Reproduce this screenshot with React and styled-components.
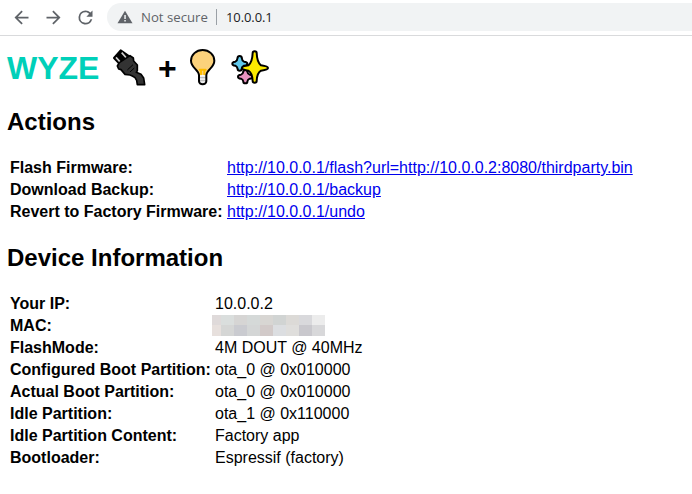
import React from "react";
import styled, { createGlobalStyle } from "styled-components";

const GlobalStyle = createGlobalStyle`
  body {
    margin: 0;
    background: #fff;
    color: #000;
    font: 16px/18px "Liberation Sans", Arial, sans-serif;
    overflow: hidden;
  }
`;

const Toolbar = styled.header`
  display: flex;
  align-items: flex-start;
  box-sizing: border-box;
  height: 36px;
  padding: 3px 0 0 10px;
  border-bottom: 1px solid #d9dadc;
`;

const NavButton = styled.button`
  display: flex;
  align-items: center;
  justify-content: center;
  width: 22px;
  height: 28px;
  margin-right: 10px;
  padding: 0;
  border: 0;
  background: none;
  color: #5f6368;
`;

const AddressBar = styled.div`
  display: flex;
  align-items: center;
  flex: 1;
  box-sizing: border-box;
  height: 28px;
  margin-left: 1px;
  padding-left: 10px;
  border-radius: 14px 0 0 14px;
  background: #f1f3f4;
  font: 14px/28px "Open Sans", "Noto Sans", sans-serif;
`;

const Security = styled.span`
  width: 67px;
  margin-left: 8px;
  color: #5f6368;
  font-size: 13.2px;
  white-space: nowrap;
`;

const Divider = styled.span`
  width: 1px;
  height: 16px;
  margin: 0 9px 0 8px;
  background: #9aa0a6;
`;

const Address = styled.span`
  color: #202124;
  font-size: 13px;
  letter-spacing: -0.1px;
`;

const Page = styled.main`
  padding: 8px 7px;
`;

const Title = styled.h1`
  display: flex;
  align-items: flex-start;
  height: 50px;
  margin: 0 0 14px;
  font-size: 32px;
  line-height: 48px;
`;

const Brand = styled.span`
  width: 103px;
  color: #00d0b9;
`;

const Plus = styled.span`
  width: 28px;
  padding-left: 8px;
`;

const Heading = styled.h2`
  margin: 0 0 21px;
  font-size: 24px;
  line-height: 28px;
`;

const List = styled.dl`
  display: grid;
  grid-template-columns: ${(p) => p.$label}px 1fr;
  grid-auto-rows: 22px;
  margin: 0 0 ${(p) => p.$gap || 0}px;
  padding-left: 3px;
  line-height: 22px;
  white-space: nowrap;
`;

const Term = styled.dt`
  font-weight: bold;
`;

const Value = styled.dd`
  margin: 0;
`;

const Link = styled.a`
  color: #0000ee;
  text-decoration: underline;
`;

const Mosaic = styled.span`
  display: grid;
  grid-template-columns: 9px repeat(8, 13px);
  grid-template-rows: 10px 11px;
  width: 113px;
  height: 21px;
  margin-left: -3px;
`;

const Tile = styled.span`
  background: ${(p) => p.$color};
`;

const tiles = [
  "#dfdada", "#dadedd", "#d6d5d4", "#d5d9d8", "#d8d6d3", "#d1d4d3", "#dcdad7", "#d9d9dc", "#ececec",
  "#e7e0dd", "#d5d6d5", "#cacbd0", "#d4d6d6", "#d2cac9", "#dcdee1", "#dfdedc", "#c9c8cd", "#d8d8da",
];

const BackIcon = () => (
  <svg width="21" height="21" viewBox="0 0 24 24" fill="currentColor">
    <path d="M20 11H7.83l5.59-5.59L12 4l-8 8 8 8 1.41-1.41L7.83 13H20z" />
  </svg>
);

const ForwardIcon = () => (
  <svg width="21" height="21" viewBox="0 0 24 24" fill="currentColor">
    <path d="M12 4l-1.41 1.41L16.17 11H4v2h12.17l-5.58 5.59L12 20l8-8z" />
  </svg>
);

const ReloadIcon = () => (
  <svg width="21" height="21" viewBox="0 0 24 24" fill="currentColor">
    <path d="M17.65 6.35A7.96 7.96 0 0 0 12 4a8 8 0 1 0 7.73 10h-2.08A6 6 0 1 1 12 6c1.66 0 3.14.69 4.22 1.78L13 11h7V4z" />
  </svg>
);

const WarningIcon = () => (
  <svg width="16" height="14" viewBox="0 0 16 14">
    <path d="M8 .7 15.5 13.3H.5z" fill="#5f6368" />
    <path d="M7.3 5h1.5v4H7.3zM7.3 10h1.5v1.5H7.3z" fill="#f1f3f4" />
  </svg>
);

const PlugIcon = () => (
  <svg width="40" height="50" viewBox="30 0 120 150" strokeLinejoin="round" strokeLinecap="round">
    <path d="M42 42 62 19 92 40 62 63z" fill="#000" stroke="#000" strokeWidth="6" />
    <path d="m48 40 17 19M65 26l17 19" stroke="#d0cfce" strokeWidth="5" strokeLinecap="butt" />
    <path d="m90 35 10 7 1 9 11 12v17l-3 5 14 6 8 11 3 20h-22l-2-13-5-8-8-5-7-3-15-2-12-14-7-2-4-9 6-10z" fill="#333" stroke="#000" strokeWidth="5" />
    <path d="m83 77 15-14M91 83l11-10" stroke="#000" strokeWidth="3" />
  </svg>
);

const BulbIcon = () => (
  <svg width="34" height="50" viewBox="18 0 102 150" strokeLinejoin="round" strokeLinecap="round">
    <path d="M57 95v17c0 5 5 9 11 9s11-4 11-9V95z" fill="#eee" />
    <path d="M57 93C55 76 33 71 33 50a35 32 0 0 1 70 0c0 21-22 26-24 43z" fill="#fcd27b" />
    <path d="M63 91V77h-4M73 91V77h4M60 77h17" fill="none" stroke="#ffbd00" strokeWidth="6" />
    <path d="M60 101h16M60 110h16" stroke="#b7b7b7" strokeWidth="3" />
    <path d="M57 112V93C55 76 33 71 33 50a35 32 0 0 1 70 0c0 21-22 26-24 43v19c0 5-5 9-11 9s-11-4-11-9z" fill="none" stroke="#000" strokeWidth="6" />
  </svg>
);

const SparklesIcon = () => (
  <svg width="39" height="50" viewBox="18 0 117 150" stroke="#000" strokeWidth="6" strokeLinejoin="round">
    <path d="M44 36q6 0 6 5 1 9 7 12 10 1 10 6t-10 6q-6 3-7 10 0 5-6 5t-6-5q-1-7-7-10-9-1-9-6t9-6q6-3 7-12 0-5 6-5z" fill="#61c9ed" />
    <path d="M61 78q6 0 6 5 1 7 7 9 9 1 9 6t-9 6q-6 2-7 9 0 5-6 5t-6-5q-1-7-7-9-9-1-9-6t9-6q6-2 7-9 0-5 6-5z" fill="#e893bf" />
    <path d="M89 22q6 0 6 5 1 28 13 37 21 3 21 8t-21 8q-12 7-13 31 0 5-6 5t-6-5q-1-24-13-31-19-3-19-8t19-8q12-9 13-37 0-5 6-5z" fill="#fcea00" />
  </svg>
);

const actions = [
  ["Flash Firmware:", "http://10.0.0.1/flash?url=http://10.0.0.2:8080/thirdparty.bin"],
  ["Download Backup:", "http://10.0.0.1/backup"],
  ["Revert to Factory Firmware:", "http://10.0.0.1/undo"],
];

const info = [
  ["Your IP:", "10.0.0.2"],
  ["MAC:", null],
  ["FlashMode:", "4M DOUT @ 40MHz"],
  ["Configured Boot Partition:", "ota_0 @ 0x010000"],
  ["Actual Boot Partition:", "ota_0 @ 0x010000"],
  ["Idle Partition:", "ota_1 @ 0x110000"],
  ["Idle Partition Content:", "Factory app"],
  ["Bootloader:", "Espressif (factory)"],
];

const IconSlot = styled.span`
  display: flex;
  margin-right: ${(p) => p.$gap || 0}px;
`;

export default function App() {
  return (
    <>
      <GlobalStyle />
      <Toolbar>
        <NavButton aria-label="Back"><BackIcon /></NavButton>
        <NavButton aria-label="Forward"><ForwardIcon /></NavButton>
        <NavButton aria-label="Reload"><ReloadIcon /></NavButton>
        <AddressBar>
          <WarningIcon />
          <Security>Not secure</Security>
          <Divider />
          <Address>10.0.0.1</Address>
        </AddressBar>
      </Toolbar>
      <Page>
        <Title>
          <Brand>WYZE</Brand>
          <IconSlot><PlugIcon /></IconSlot>
          <Plus>+</Plus>
          <IconSlot $gap={11}><BulbIcon /></IconSlot>
          <IconSlot><SparklesIcon /></IconSlot>
        </Title>
        <Heading>Actions</Heading>
        <List $label={217} $gap={21}>
          {actions.map(([label, url]) => (
            <React.Fragment key={label}>
              <Term>{label}</Term>
              <Value><Link href={url}>{url}</Link></Value>
            </React.Fragment>
          ))}
        </List>
        <Heading>Device Information</Heading>
        <List $label={205}>
          {info.map(([label, value]) => (
            <React.Fragment key={label}>
              <Term>{label}</Term>
              <Value>
                {value ?? (
                  <Mosaic>
                    {tiles.map((color, i) => <Tile key={i} $color={color} />)}
                  </Mosaic>
                )}
              </Value>
            </React.Fragment>
          ))}
        </List>
      </Page>
    </>
  );
}
